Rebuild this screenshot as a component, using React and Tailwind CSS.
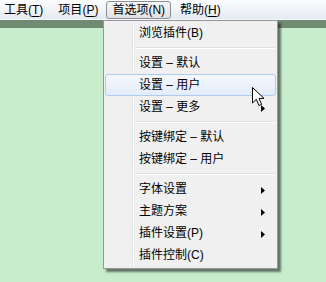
import React from 'react';

const font = "font-['Liberation_Sans','Noto_Sans_CJK_SC',sans-serif]";

const Arrow = () => (
  <svg width="4" height="7" viewBox="0 0 4 7" className="absolute right-[10px] top-[8px]">
    <path d="M0 0 L4 3.5 L0 7 Z" fill="#000" />
  </svg>
);

const Item = ({ label, sub, active }) => (
  <div
    className={
      'relative h-[22px] flex items-center mx-[1px] pl-[33px] rounded-[3px] border ' +
      (active
        ? 'border-[#aecbf0] bg-gradient-to-b from-[#f5f8fd] to-[#e3ecfa]'
        : 'border-transparent')
    }
  >
    <span className="relative z-10">{label}</span>
    {sub && <Arrow />}
  </div>
);

const Sep = () => (
  <div className="h-[8px] flex flex-col justify-center pl-[31px] pr-[2px]">
    <div className="h-px bg-[#e0e0e0]" />
    <div className="h-px bg-white" />
  </div>
);

const TopItem = ({ text, k, boxed }) => (
  <div
    className={
      'h-[18px] flex items-center ' +
      (boxed
        ? 'px-[5px] rounded-[3px] border border-[#8a8d91] bg-gradient-to-b from-[#f6f7f8] to-[#dfe1e4]'
        : 'border border-transparent')
    }
  >
    {text}(<span className={boxed ? '' : 'underline underline-offset-2'}>{k}</span>)
  </div>
);

export default function App() {
  return (
    <div className={`relative w-[326px] h-[282px] overflow-hidden bg-[#c7edcc] text-[12px] text-black ${font}`}>
      {/* menu bar */}
      <div className="h-[20px] flex items-center pl-[3px] bg-gradient-to-b from-[#fcfdfe] to-[#e5eaf2] border-b border-[#f4f6f9]">
        <TopItem text="工具" k="T" />
        <div className="w-[13px]" />
        <TopItem text="项目" k="P" />
        <div className="w-[7px]" />
        <TopItem text="首选项" k="N" boxed />
        <div className="w-[8px]" />
        <TopItem text="帮助" k="H" />
      </div>
      <div className="h-[8px] bg-[#718b73]" />

      {/* dropdown */}
      <div className="absolute left-[103px] top-[20px] w-[175px] h-[249px] bg-[#f0f0f0] border border-[#979797] shadow-[3px_3px_2px_rgba(0,0,0,0.5)] py-[1px]">
        <div className="absolute left-[28px] top-[1px] bottom-[1px] w-[2px] flex">
          <div className="w-px bg-[#e2e3e3]" />
          <div className="w-px bg-white" />
        </div>
        <Item label="浏览插件(B)" />
        <Sep />
        <Item label="设置 – 默认" />
        <Item label="设置 – 用户" active />
        <Item label="设置 – 更多" sub />
        <Sep />
        <Item label="按键绑定 – 默认" />
        <Item label="按键绑定 – 用户" />
        <Sep />
        <Item label="字体设置" sub />
        <Item label="主题方案" sub />
        <Item label="插件设置(P)" sub />
        <Item label="插件控制(C)" />
      </div>

      {/* cursor */}
      <svg width="13" height="20" viewBox="0 0 13 20" className="absolute left-[252px] top-[87px]">
        <path
          d="M0.5 0.5 L0.5 16 L4.3 12.3 L7 18.5 L9.6 17.4 L7 11.4 L12 11.4 Z"
          fill="#fff"
          stroke="#000"
          strokeWidth="1"
          strokeLinejoin="miter"
        />
      </svg>
    </div>
  );
}
